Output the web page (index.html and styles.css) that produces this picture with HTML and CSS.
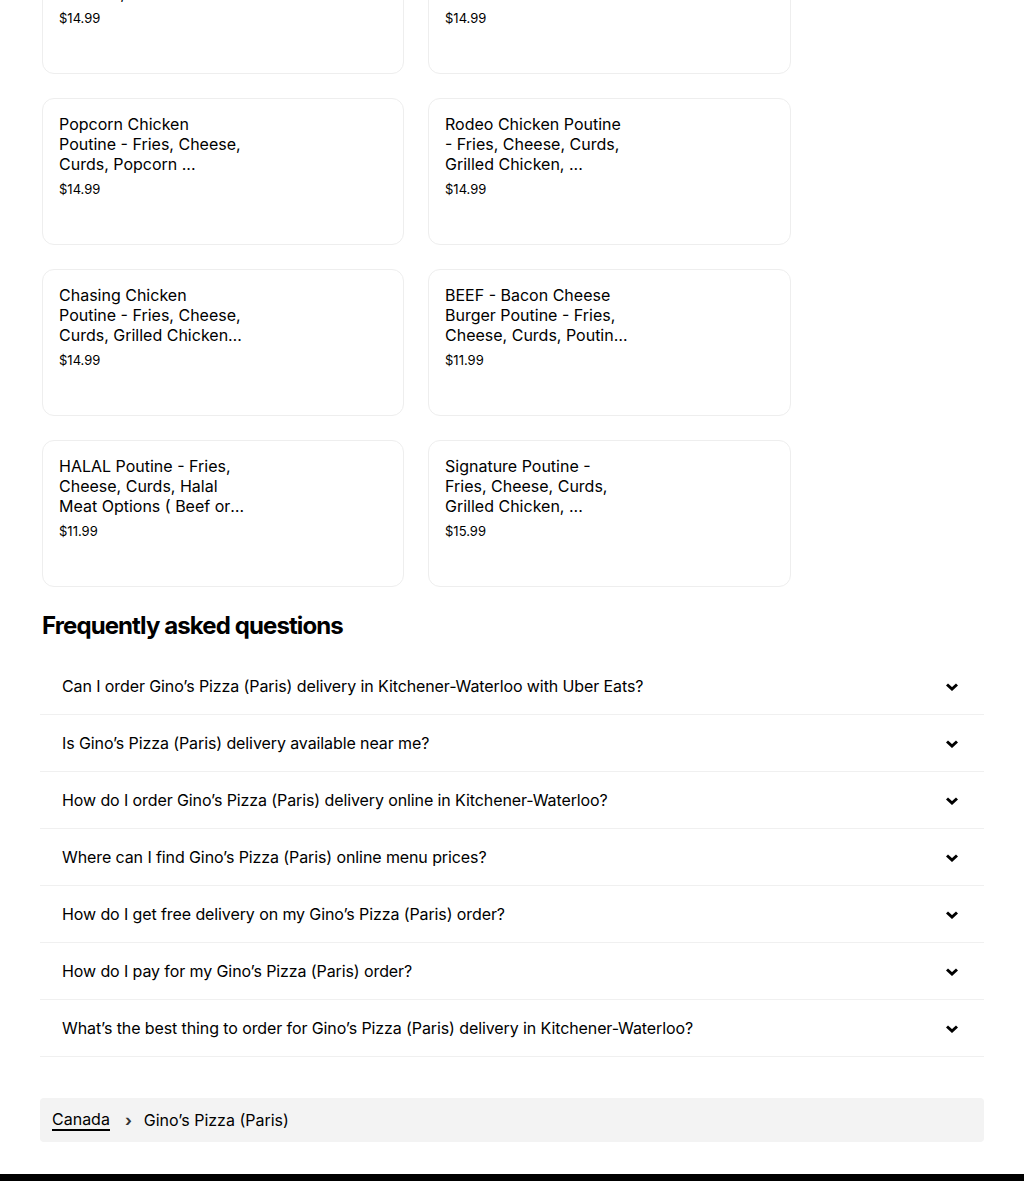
FILE: index.html
```html
<!doctype html>
<html lang="en">
<head>
  <meta charset="utf-8">
  <title>Gino's Pizza (Paris)</title>
  <link rel="stylesheet" href="styles.css">
</head>
<body>

  <div id="page">
    <!-- menu items -->
    <div class="items">
      <div class="card">
        <div class="title">Chicken Poutine - Fries, Cheese, Curds, Grilled Chicken, ...</div>
        <div class="price">$14.99</div>
      </div>
      <div class="card">
        <div class="title">Butter Chicken Poutine - Fries, Cheese, Curds, Butter ...</div>
        <div class="price">$14.99</div>
      </div>
      <div class="card">
        <div class="title">Popcorn Chicken Poutine - Fries, Cheese, Curds, Popcorn ...</div>
        <div class="price">$14.99</div>
      </div>
      <div class="card">
        <div class="title">Rodeo Chicken Poutine - Fries, Cheese, Curds, Grilled Chicken, ...</div>
        <div class="price">$14.99</div>
      </div>
      <div class="card">
        <div class="title">Chasing Chicken Poutine - Fries, Cheese, Curds, Grilled Chicken, Bacon</div>
        <div class="price">$14.99</div>
      </div>
      <div class="card">
        <div class="title">BEEF - Bacon Cheese Burger Poutine - Fries, Cheese, Curds, Poutine Gravy</div>
        <div class="price">$11.99</div>
      </div>
      <div class="card">
        <div class="title">HALAL Poutine - Fries, Cheese, Curds, Halal Meat Options ( Beef or Chicken )</div>
        <div class="price">$11.99</div>
      </div>
      <div class="card">
        <div class="title">Signature Poutine - Fries, Cheese, Curds, Grilled Chicken, ...</div>
        <div class="price">$15.99</div>
      </div>
    </div>

    <!-- faq -->
    <h2 class="faq-head">Frequently asked questions</h2>
    <div class="faq">
      <div class="faq-row"><span>Can I order Gino’s Pizza (Paris) delivery in Kitchener-Waterloo with Uber Eats?</span><svg class="chev" viewBox="0 0 12 8"><path d="M1 1.5 6 6 11 1.5"/></svg></div>
      <div class="faq-row"><span>Is Gino’s Pizza (Paris) delivery available near me?</span><svg class="chev" viewBox="0 0 12 8"><path d="M1 1.5 6 6 11 1.5"/></svg></div>
      <div class="faq-row"><span>How do I order Gino’s Pizza (Paris) delivery online in Kitchener-Waterloo?</span><svg class="chev" viewBox="0 0 12 8"><path d="M1 1.5 6 6 11 1.5"/></svg></div>
      <div class="faq-row"><span>Where can I find Gino’s Pizza (Paris) online menu prices?</span><svg class="chev" viewBox="0 0 12 8"><path d="M1 1.5 6 6 11 1.5"/></svg></div>
      <div class="faq-row"><span>How do I get free delivery on my Gino’s Pizza (Paris) order?</span><svg class="chev" viewBox="0 0 12 8"><path d="M1 1.5 6 6 11 1.5"/></svg></div>
      <div class="faq-row"><span>How do I pay for my Gino’s Pizza (Paris) order?</span><svg class="chev" viewBox="0 0 12 8"><path d="M1 1.5 6 6 11 1.5"/></svg></div>
      <div class="faq-row"><span>What’s the best thing to order for Gino’s Pizza (Paris) delivery in Kitchener-Waterloo?</span><svg class="chev" viewBox="0 0 12 8"><path d="M1 1.5 6 6 11 1.5"/></svg></div>
    </div>

    <!-- breadcrumbs -->
    <div class="crumbs">
      <a href="#">Canada</a>
      <span class="sep">›</span>
      <span>Gino’s Pizza (Paris)</span>
    </div>
  </div>

  <div id="footer"></div>

</body>
</html>
```

FILE: styles.css
```css
body {
  background-color: white;
  font: 16px 'Inter', 'Liberation Sans', sans-serif;
  color: #000;
  margin: 0px;
  padding: 0px;
}
#page {
  margin: 0 40px;
}

.items {
  display: grid;
  grid-template-columns: 362px 363px;
  column-gap: 24px;
  row-gap: 24px;
  margin-top: -73px;
  padding-left: 2px;
}
.card {
  height: 147px;
  box-sizing: border-box;
  border: 1px solid #eeeeee;
  border-radius: 12px;
  padding: 15px 16px;
}
.title {
  width: 186px;
  font-size: 16px;
  line-height: 20px;
  height: 60px;
  display: -webkit-box;
  -webkit-box-orient: vertical;
  -webkit-line-clamp: 3;
  overflow: hidden;
}
.price {
  margin-top: 5px;
  font-size: 13px;
  line-height: 20px;
  color: #000;
}

.faq-head {
  margin: 21px 0 14px 2px;
  font-size: 24px;
  line-height: 36px;
  font-weight: 700;
  letter-spacing: -0.9px;
}
.faq-row {
  height: 56px;
  display: flex;
  align-items: center;
  justify-content: space-between;
  padding: 0 26px 0 22px;
  border-bottom: 1px solid #f0f0f0;
  letter-spacing: -0.1px;
}
.chev {
  width: 12px;
  height: 8px;
  margin-top: 2px;
  fill: none;
  stroke: #000;
  stroke-width: 3;
}

.crumbs {
  margin-top: 41px;
  height: 44px;
  display: flex;
  align-items: center;
  padding: 0 12px;
  background-color: #f3f3f3;
  border-radius: 4px;
}
.crumbs a {
  color: #000;
  text-decoration: none;
  border-bottom: 2px solid #000;
  line-height: 20px;
  margin-top: -1px;
}
.crumbs .sep {
  margin: 0 12px 0 15px;
  color: #333;
  font-size: 16px;
  font-weight: 700;
}

#footer {
  margin-top: 32px;
  height: 60px;
  background-color: black;
}
```
